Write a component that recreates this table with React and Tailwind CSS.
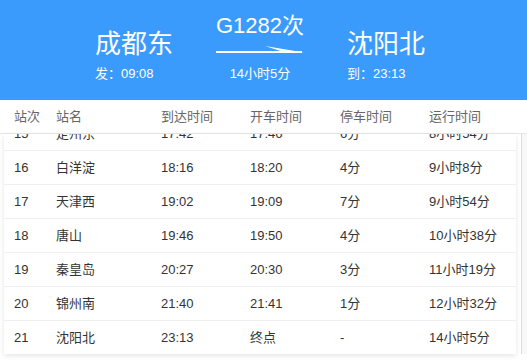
import React from 'react';

const rows = [
  ['15', '定州东', '17:42', '17:46', '6分', '8小时54分'],
  ['16', '白洋淀', '18:16', '18:20', '4分', '9小时8分'],
  ['17', '天津西', '19:02', '19:09', '7分', '9小时54分'],
  ['18', '唐山', '19:46', '19:50', '4分', '10小时38分'],
  ['19', '秦皇岛', '20:27', '20:30', '3分', '11小时19分'],
  ['20', '锦州南', '21:40', '21:41', '1分', '12小时32分'],
  ['21', '沈阳北', '23:13', '终点', '-', '14小时5分'],
];

const cols = 'grid grid-cols-[42px_105px_89px_90px_89px_1fr] items-center';

const Arrow = () => (
  <svg width="88" height="10" viewBox="0 0 88 10" className="block">
    <rect x="0" y="6" width="86" height="2" fill="#fff" />
    <polygon points="49,1 88,7.6 66,6.5" fill="#fff" />
  </svg>
);

export default function App() {
  return (
    <div className="w-[527px] h-[363px] bg-white overflow-hidden font-['Liberation_Sans','Noto_Sans_CJK_SC',sans-serif]">
      {/* train summary */}
      <header className="h-[100px] bg-[#3b9bfd] text-white flex justify-center items-end gap-[43px] pb-[20px] pr-[7px]">
        <div className="w-[78px] flex flex-col">
          <div className="text-[26px] leading-[26px]">成都东</div>
          <div className="text-[13px] leading-[13px] mt-[10px] whitespace-nowrap">发：09:08</div>
        </div>
        <div className="w-[88px] flex flex-col items-center">
          <div className="text-[22px] leading-[22px] whitespace-nowrap">G1282次</div>
          <div className="mt-[8px]"><Arrow /></div>
          <div className="text-[13px] leading-[13px] mt-[12px] whitespace-nowrap">14小时5分</div>
        </div>
        <div className="w-[78px] flex flex-col">
          <div className="text-[26px] leading-[26px]">沈阳北</div>
          <div className="text-[13px] leading-[13px] mt-[10px] whitespace-nowrap">到：23:13</div>
        </div>
      </header>

      {/* column titles */}
      <div className={`${cols} h-[34px] border-b border-[#e6e6e6] px-[4px] text-[13px] text-[#666]`}>
        <div className="pl-[10px]">站次</div>
        <div className="pl-[10px]">站名</div>
        <div className="pl-[10px]">到达时间</div>
        <div className="pl-[10px]">开车时间</div>
        <div className="pl-[10px]">停车时间</div>
        <div className="pl-[10px]">运行时间</div>
      </div>

      <div className="flex h-[220px]">
        <div className="w-[512px] ml-[4px] overflow-hidden shadow-[0_2px_5px_rgba(0,0,0,0.1)]">
          <div className="-mt-[17px]">
            {rows.map((r) => (
              <div key={r[0]} className={`${cols} h-[34px] border-b border-[#efefef] text-[13px] text-[#333]`}>
                {r.map((c, i) => (
                  <div key={i} className="pl-[10px] whitespace-nowrap">{c}</div>
                ))}
              </div>
            ))}
          </div>
        </div>
        <div className="ml-[5px] flex-1 bg-[#f8f8f8] border-l border-[#dcdcdc]" />
      </div>
    </div>
  );
}
